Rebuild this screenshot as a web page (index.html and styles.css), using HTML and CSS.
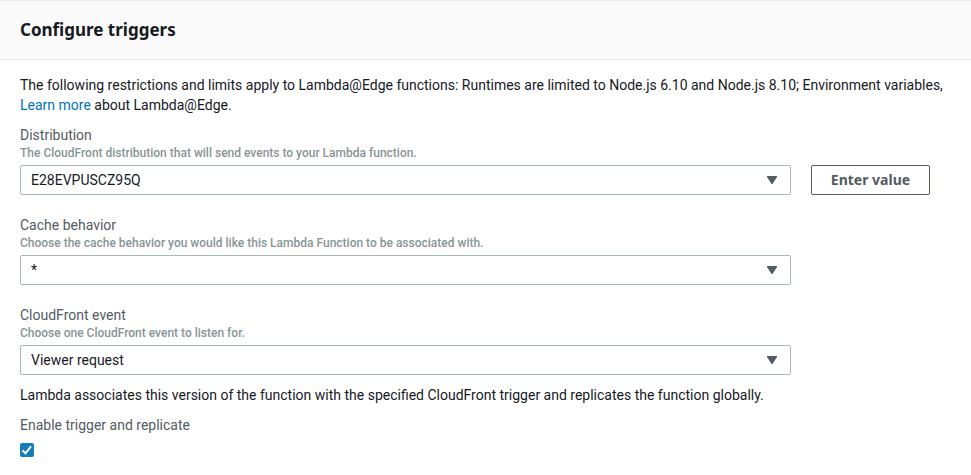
FILE: index.html
```
<!DOCTYPE html>
<html lang="en">
<head>
<meta charset="utf-8">
<title>Configure triggers</title>
<link rel="stylesheet" href="styles.css">
</head>
<body>
<section class="panel">
  <header class="panel-header">
    <h2>Configure triggers</h2>
  </header>
  <form class="panel-body">
    <p class="intro">The following restrictions and limits apply to Lambda@Edge functions: Runtimes are limited to Node.js 6.10 and Node.js 8.10; Environment variables,<br><a href="#">Learn more</a> about Lambda@Edge.</p>

    <div class="field">
      <label for="distribution">Distribution</label>
      <p class="hint" id="distribution-hint">The CloudFront distribution that will send events to your Lambda function.</p>
      <div class="control-row">
        <div class="select">
          <select id="distribution" aria-describedby="distribution-hint"><option>E28EVPUSCZ95Q</option></select>
          <svg class="caret" viewBox="0 0 10 8" aria-hidden="true"><path d="M0 0h10v1L5.5 8h-1L0 1z"/></svg>
        </div>
        <button type="button" class="button">Enter value</button>
      </div>
    </div>

    <div class="field">
      <label for="cache">Cache behavior</label>
      <p class="hint" id="cache-hint">Choose the cache behavior you would like this Lambda Function to be associated with.</p>
      <div class="control-row">
        <div class="select">
          <select id="cache" aria-describedby="cache-hint"><option>*</option></select>
          <svg class="caret" viewBox="0 0 10 8" aria-hidden="true"><path d="M0 0h10v1L5.5 8h-1L0 1z"/></svg>
        </div>
      </div>
    </div>

    <div class="field">
      <label for="event">CloudFront event</label>
      <p class="hint" id="event-hint">Choose one CloudFront event to listen for.</p>
      <div class="control-row">
        <div class="select">
          <select id="event" aria-describedby="event-hint"><option>Viewer request</option></select>
          <svg class="caret" viewBox="0 0 10 8" aria-hidden="true"><path d="M0 0h10v1L5.5 8h-1L0 1z"/></svg>
        </div>
      </div>
    </div>

    <p class="note">Lambda associates this version of the function with the specified CloudFront trigger and replicates the function globally.</p>

    <div class="enable">
      <label for="enable">Enable trigger and replicate</label>
      <div class="checkbox">
        <input type="checkbox" id="enable" checked>
        <svg class="check" viewBox="0 0 14 14" aria-hidden="true"><path d="M2.5 7.5L5.5 10.3L11 3.3"/></svg>
      </div>
    </div>
  </form>
</section>
</body>
</html>
```
FILE: styles.css
```
* {
  box-sizing: border-box;
}

body {
  margin: 0;
  overflow-x: hidden;
  background: #fff;
  color: #16191f;
  font: 14px/20px Roboto, sans-serif;
}

h2,
p {
  margin: 0;
}

.panel {
  border-top: 1px solid #eaeded;
}

.panel-header {
  padding: 18px 20px;
  border-bottom: 1px solid #eaeded;
  background: #fafafa;
}

h2,
.button {
  font-family: "Noto Sans", sans-serif;
  font-weight: 700;
}

h2 {
  font-size: 17px;
  line-height: 22px;
}

.panel-body {
  padding: 15px 41px 15px 20px;
}

.intro {
  white-space: nowrap;
}

a {
  color: #0073bb;
  text-decoration: none;
}

.field {
  margin: 10px 0;
}

.field + .field {
  margin-top: 20px;
}

label {
  display: block;
  color: #545b64;
}

.hint {
  margin-bottom: 4px;
  color: #879596;
  font-size: 12px;
  font-weight: 500;
  line-height: 16px;
}

.control-row {
  display: grid;
  grid-template-columns: 1fr 119px;
  gap: 20px;
}

.select {
  position: relative;
}

select {
  display: block;
  width: 100%;
  height: 30px;
  padding: 0 30px 0 10px;
  border: 1px solid #aab7b8;
  border-radius: 2px;
  appearance: none;
  background: #fff;
  color: #16191f;
  font: inherit;
}

.caret {
  position: absolute;
  top: 11px;
  right: 14px;
  width: 10px;
  height: 8px;
  fill: #545b64;
  pointer-events: none;
}

.button {
  height: 30px;
  padding: 0;
  border: 1px solid #545b64;
  border-radius: 2px;
  background: #fff;
  color: #545b64;
  font-size: 14px;
  line-height: 20px;
}

.note {
  margin: 10px 0;
}

.checkbox {
  position: relative;
  width: 14px;
  margin-top: 8px;
}

.checkbox input {
  display: block;
  width: 14px;
  height: 14px;
  margin: 0;
  border-radius: 2px;
  appearance: none;
  background: #fff;
}

.checkbox input:checked {
  background: #147eba;
}

.check {
  position: absolute;
  inset: 0;
  width: 14px;
  height: 14px;
  fill: none;
  stroke: #fff;
  stroke-width: 2;
  pointer-events: none;
}
```
